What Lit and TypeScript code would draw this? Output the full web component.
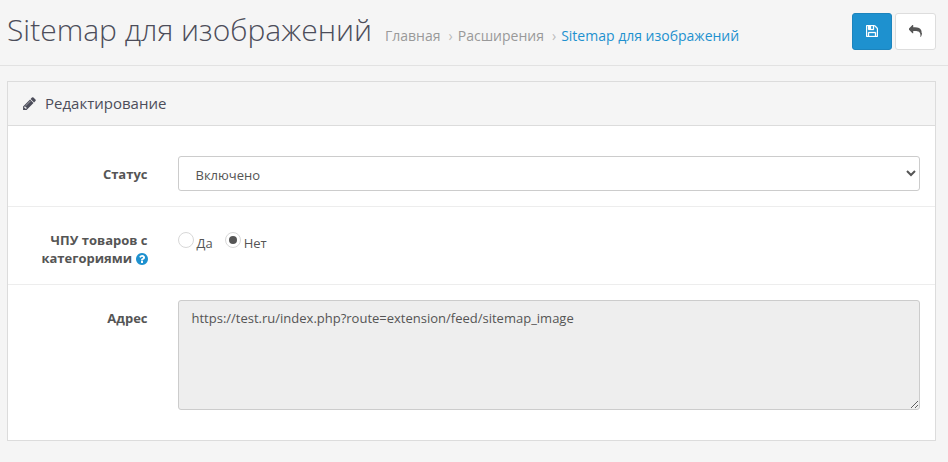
import { LitElement, html, css, svg } from "lit";
import { customElement, state } from "lit/decorators.js";

const icon = (d: string, cls: string, box = "0 0 1792 1792") => html`<svg class="icon ${cls}" viewBox=${box} aria-hidden="true">${svg`<path d=${d} />`}</svg>`;

const SAVE = "M512 1536h768v-384h-768v384zm896 0h128v-896q0-14-10-38.5t-20-34.5l-281-281q-10-10-34-20t-39-10v416q0 40-28 68t-68 28h-576q-40 0-68-28t-28-68v-416h-128v1280h128v-416q0-40 28-68t68-28h832q40 0 68 28t28 68v416zm-384-928v-320q0-13-9.5-22.5t-22.5-9.5h-192q-13 0-22.5 9.5t-9.5 22.5v320q0 13 9.5 22.5t22.5 9.5h192q13 0 22.5-9.5t9.5-22.5zm640 32v928q0 40-28 68t-68 28h-1344q-40 0-68-28t-28-68v-1344q0-40 28-68t68-28h928q40 0 88 20t76 48l280 280q28 28 48 76t20 88z";
const REPLY = "M1792 1120q0 166-127 451-3 7-10.5 24t-13.5 30-13 22q-12 17-28 17-15 0-23.5-10t-8.5-25q0-9 2.5-26.5t2.5-23.5q5-68 5-123 0-112-19.5-200.5t-54-153.5-89-112-117-79.5-145.5-48-164-25-182-7.5h-224v256q0 26-19 45t-45 19-45-19l-512-512q-19-19-19-45t19-45l512-512q19-19 45-19t45 19 19 45v256h224q713 0 875 403 53 134 53 333z";
const PENCIL = "M491 1536l91-91-235-235-91 91v107h128v128h107zm523-928q0-22-22-22-10 0-17 7l-542 542q-7 7-7 17 0 22 22 22 10 0 17-7l542-542q7-7 7-17zm-54-192l416 416-832 832h-416v-416zm683 96q0 53-37 90l-166 166-416-416 166-165q36-38 90-38 53 0 91 38l235 234q37 39 37 91z";
const HELP = "M1024 1376v-192q0-14-9-23t-23-9h-192q-14 0-23 9t-9 23v192q0 14 9 23t23 9h192q14 0 23-9t9-23zm256-672q0-88-55.5-163t-138.5-116-170-41q-243 0-371 213-15 24 8 42l132 100q7 6 19 6 16 0 25-12 53-68 86-92 34-24 86-24 48 0 85.5 26t37.5 59q0 38-20 61t-68 45q-63 28-115.5 86.5t-52.5 125.5v36q0 14 9 23t23 9h192q14 0 23-9t9-23q0-19 21.5-49.5t54.5-49.5q32-18 49-28.5t46-35 44.5-48 28-60.5 12.5-81zm384 192q0 209-103 385.5t-279.5 279.5-385.5 103-385.5-103-279.5-279.5-103-385.5 103-385.5 279.5-279.5 385.5-103 385.5 103 279.5 279.5 103 385.5z";

@customElement("app-root")
export class AppRoot extends LitElement {
  @state() private seo = "0";

  static styles = css`
    :host {
      display: block;
      min-height: 100vh;
      background: #f5f5f5;
      color: #555;
      font: 13px/18px "Open Sans", "Noto Sans", sans-serif;
    }
    * { box-sizing: border-box; }
    .header {
      display: flex;
      align-items: flex-start;
      padding: 13px 12px 15px 7px;
      border-bottom: 1px solid #e2e2e2;
    }
    .titles {
      display: flex;
      flex: 1;
      align-items: baseline;
      gap: 13px;
    }
    h1 {
      margin: 0;
      font-size: 30px;
      line-height: 34px;
      font-weight: 300;
      color: #4c4d5a;
    }
    .crumbs {
      display: flex;
      margin: 0;
      padding: 0;
      list-style: none;
      font-size: 14px;
    }
    .crumbs li + li::before {
      content: "›";
      padding: 0 5px 0 8px;
      color: #bbb;
    }
    .crumbs a { color: #999; text-decoration: none; }
    .crumbs .current { color: #1e91cf; }
    .actions { display: flex; gap: 3px; }
    .btn {
      display: flex;
      align-items: center;
      justify-content: center;
      width: 41px;
      height: 37px;
      padding: 0 0 1px;
      border: 1px solid #ddd;
      border-radius: 3px;
      background: #fff;
      color: #555;
    }
    .btn.primary {
      width: 40px;
      border-color: #1c84bd;
      background: #1e91cf;
      color: #fff;
    }
    .icon { fill: currentColor; width: 13px; height: 13px; }
    .save { width: 12px; height: 12px; stroke: currentColor; stroke-width: 40; }
    .panel {
      margin: 15px 12px 21px 7px;
      border: 1px solid #dcdcdc;
      background: #fff;
    }
    .panel-head {
      display: flex;
      align-items: center;
      gap: 8px;
      padding: 10px 14px;
      border-bottom: 1px solid #dcdcdc;
      background: #f5f5f5;
    }
    .pencil { width: 15px; height: 15px; color: #4c4d5a; }
    h2 {
      margin: 0;
      font-size: 15px;
      line-height: 23px;
      font-weight: 400;
      color: #4c4d5a;
    }
    form { padding: 15px 0; }
    .row {
      display: grid;
      grid-template-columns: 1fr 5fr;
      padding: 15px 0;
    }
    .row + .row { border-top: 1px solid #ededed; }
    .label {
      padding: 9px 15px 0 0;
      text-align: right;
      font-weight: 700;
    }
    .wrapped { padding-bottom: 2px; }
    .help {
      width: 12px;
      height: 12px;
      color: #1e91cf;
      vertical-align: -2px;
    }
    .field { padding: 0 15px; }
    select, textarea {
      display: block;
      width: 100%;
      border: 1px solid #ccc;
      border-radius: 3px;
      background: #fff;
      color: #555;
      font: inherit;
    }
    select { height: 35px; padding: 2px 13px 0; }
    textarea {
      height: 110px;
      padding: 8px 13px;
      background: #eee;
      resize: vertical;
    }
    .radios { display: flex; gap: 12px; padding-top: 10px; }
    .radio { display: flex; align-items: flex-start; gap: 3px; }
    .radio span { padding-top: 2px; }
    .radio input {
      appearance: none;
      display: grid;
      place-items: center;
      width: 16px;
      height: 16px;
      margin: 0;
      border: 1px solid #d8d8d8;
      border-radius: 50%;
      background: #fff;
    }
    .radio input:checked::before {
      content: "";
      width: 8px;
      height: 8px;
      border-radius: 50%;
      background: #555;
    }
  `;

  private radio(value: string, text: string) {
    return html`<label class="radio">
      <input type="radio" name="seo" .value=${value} .checked=${this.seo === value}
        @change=${() => (this.seo = value)} /><span>${text}</span>
    </label>`;
  }

  render() {
    return html`
      <header class="header">
        <div class="titles">
          <h1>Sitemap для изображений</h1>
          <nav>
            <ul class="crumbs">
              <li><a href="#">Главная</a></li>
              <li><a href="#">Расширения</a></li>
              <li><a class="current" href="#">Sitemap для изображений</a></li>
            </ul>
          </nav>
        </div>
        <div class="actions">
          <button class="btn primary" type="submit" form="feed" aria-label="Сохранить">${icon(SAVE, "save", "128 128 1536 1536")}</button>
          <button class="btn" type="button" aria-label="Назад">${icon(REPLY, "reply")}</button>
        </div>
      </header>
      <main class="panel">
        <div class="panel-head">${icon(PENCIL, "pencil")}<h2>Редактирование</h2></div>
        <form id="feed" @submit=${(e: Event) => e.preventDefault()}>
          <div class="row">
            <label class="label" for="status">Статус</label>
            <div class="field">
              <select id="status">
                <option value="1" selected>Включено</option>
                <option value="0">Отключено</option>
              </select>
            </div>
          </div>
          <div class="row">
            <div class="label wrapped" id="seo-label">ЧПУ товаров с категориями ${icon(HELP, "help", "128 128 1536 1536")}</div>
            <div class="field radios" role="radiogroup" aria-labelledby="seo-label">
              ${this.radio("1", "Да")}${this.radio("0", "Нет")}
            </div>
          </div>
          <div class="row">
            <label class="label" for="address">Адрес</label>
            <div class="field">
              <textarea id="address" readonly .value=${"https://test.ru/index.php?route=extension/feed/sitemap_image"}></textarea>
            </div>
          </div>
        </form>
      </main>
    `;
  }
}
